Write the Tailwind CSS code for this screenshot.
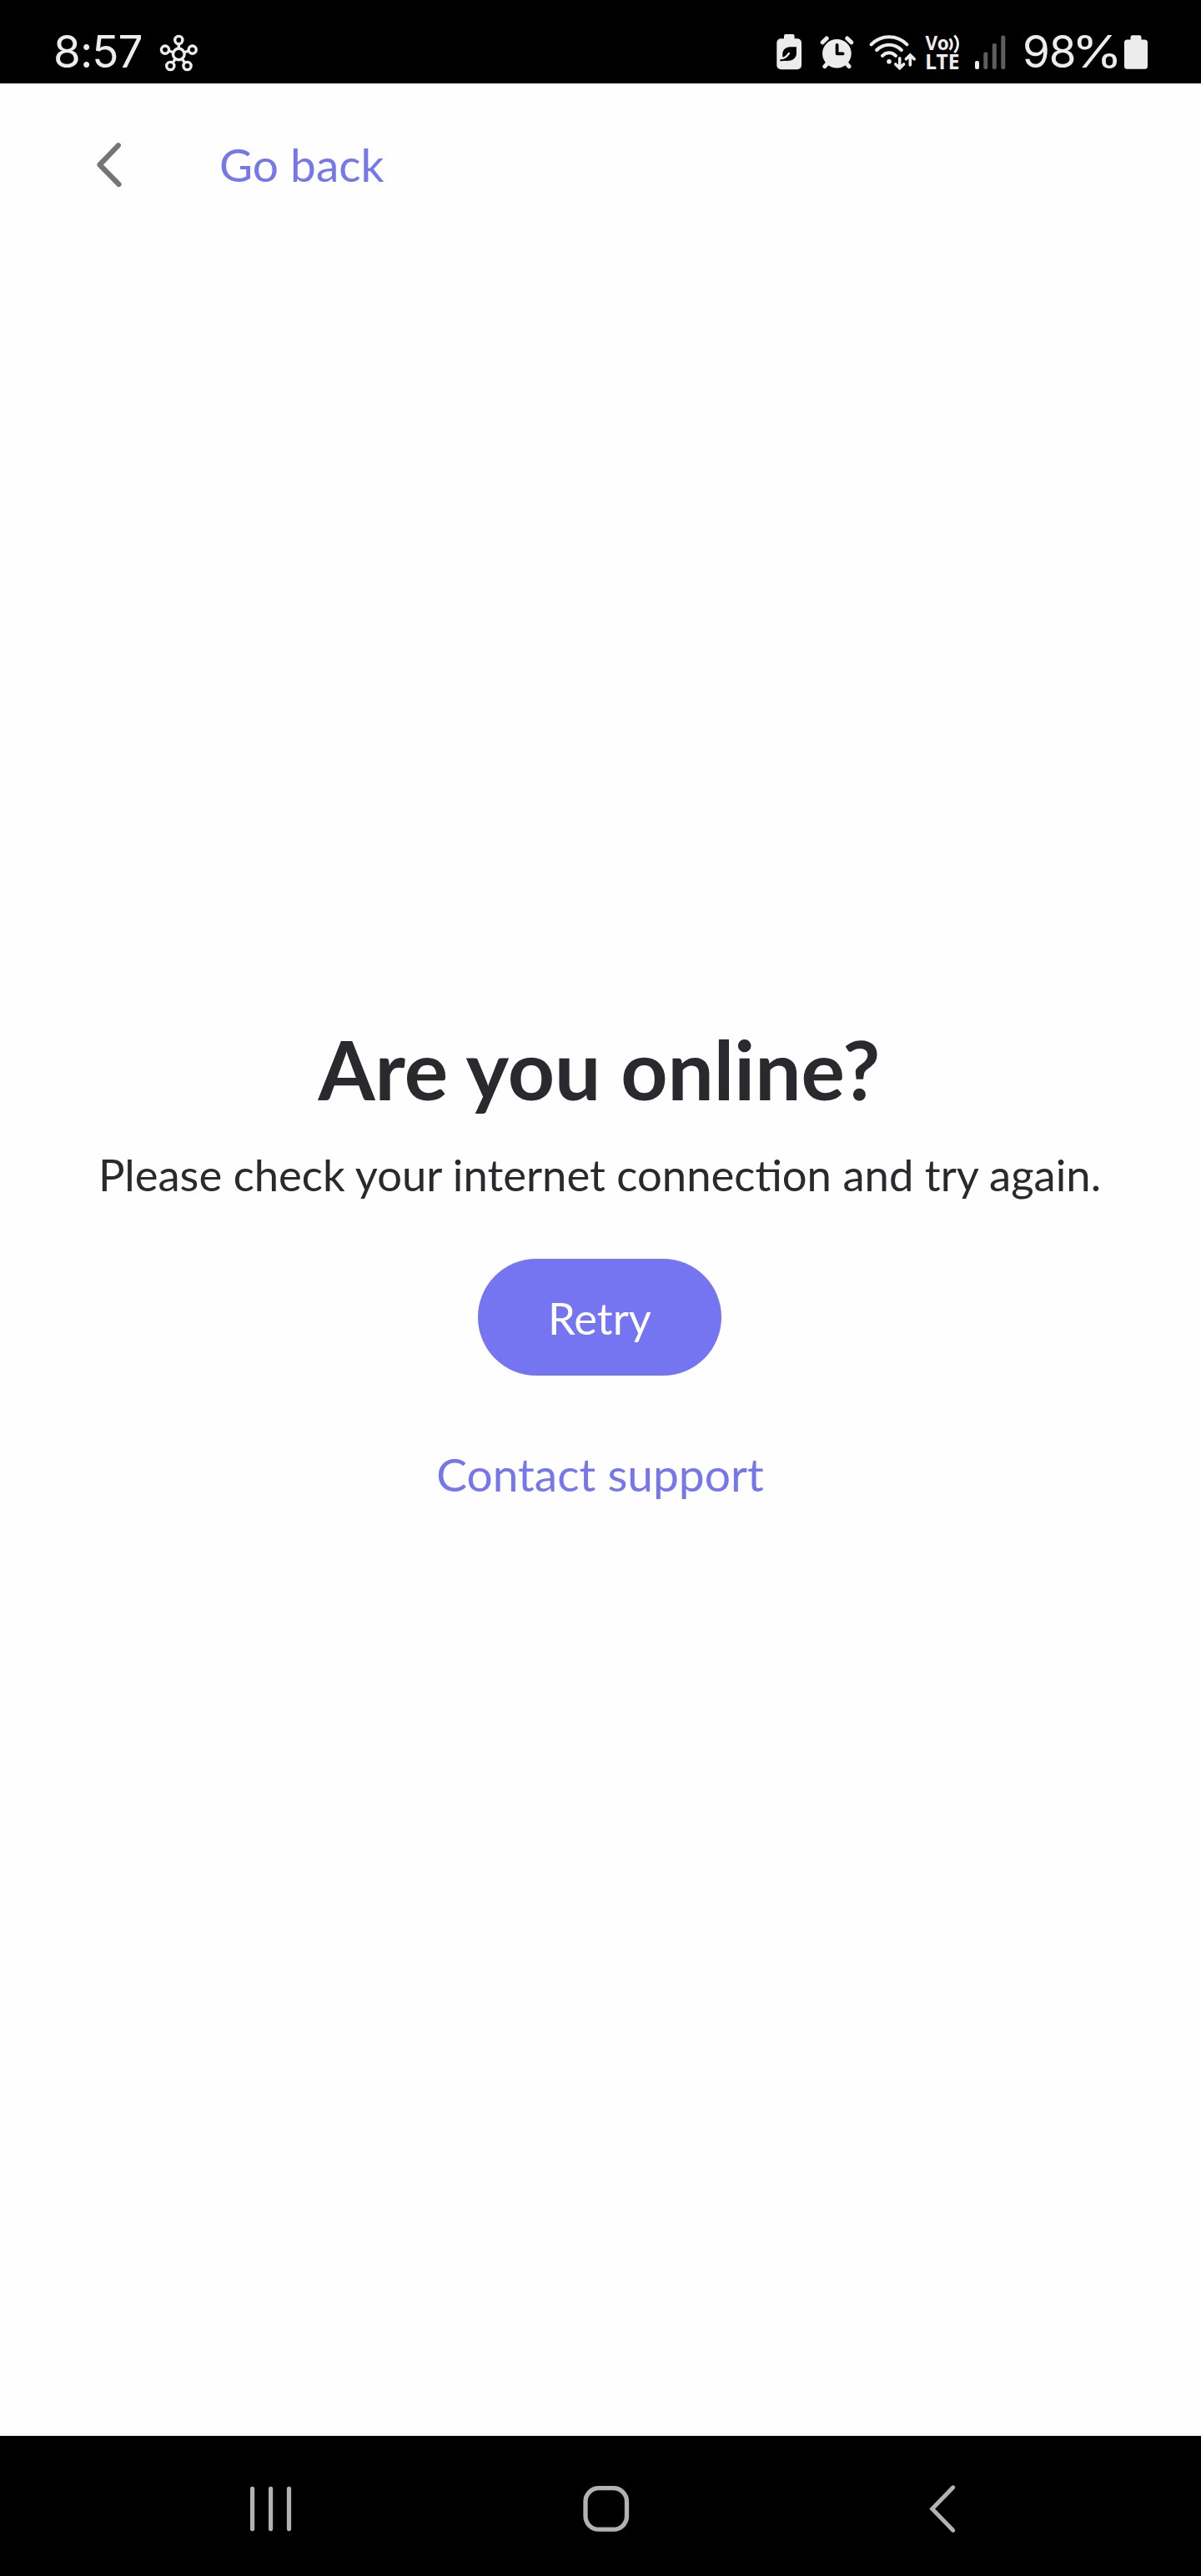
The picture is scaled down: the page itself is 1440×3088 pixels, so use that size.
<!DOCTYPE html>
<html lang="en">
<head>
<meta charset="utf-8">
<title>Are you online?</title>
<script src="https://cdn.jsdelivr.net/npm/@tailwindcss/browser@4"></script>
</head>
<body class="w-[1440px] h-[3088px] flex flex-col bg-[#fefefe] font-[Lato,sans-serif] overflow-hidden">

  <!-- Status bar -->
  <div class="h-[100px] shrink-0 bg-black text-[#ececec] flex items-start justify-between pl-[64px] pr-[63px] pt-[36px]">
    <div class="flex items-start">
      <span class="w-[126px] font-[Inter,sans-serif] text-[53px] leading-[53px] tracking-[-0.9px]">8:57</span>
      <svg class="mt-[4px] w-[50px] h-[46px]" viewBox="190 40 50 46" fill="none" stroke="currentColor" stroke-width="3.4">
        <path d="M214.3 52v6M202.5 61l6 2M226.2 61l-6 2M207 75.2l3.6-5M221.6 75.2l-3.6-5"/>
        <circle cx="214.3" cy="65" r="6.8"/>
        <circle cx="214.3" cy="48" r="4.6"/>
        <circle cx="198" cy="59.6" r="4.6"/>
        <circle cx="230.7" cy="59.6" r="4.6"/>
        <circle cx="204.3" cy="79" r="4.6"/>
        <circle cx="224.5" cy="79" r="4.6"/>
      </svg>
    </div>
    <div class="flex items-start">
      <!-- Power saving -->
      <svg class="mt-[4px] w-[32px] h-[46px]" viewBox="930 40 32 46" fill="currentColor">
        <path d="M942 41h8.600a2 2 0 0 1 2 2v3.200h3.400a5 5 0 0 1 5 5v27.100a5 5 0 0 1-5 5h-19.700a5 5 0 0 1-5-5v-27.100a5 5 0 0 1 5-5h3.700v-3.200a2 2 0 0 1 2-2z"/>
        <path fill="#000" d="M955 56.300h-7.500c-6 0-9.600 4.200-9.300 10.200c.1 2.600 1.200 4.700 2.500 6.200c7.500.9 14.300-1.500 14.300-9.500z"/>
        <path fill="none" stroke="#ececec" stroke-width="2.200" stroke-linecap="round" d="M936 70.300c4 .2 7-2.300 10-6.300"/>
        <path fill="none" stroke="#000" stroke-width="2" d="M935.300 72.200c3.200.2 5-.4 7-1.400"/>
      </svg>
      <!-- Alarm -->
      <svg class="ml-[20px] mt-[4px] w-[42px] h-[46px]" viewBox="982 40 42 46" fill="none" stroke="currentColor" stroke-width="5" stroke-linecap="round">
        <circle cx="1003.400" cy="64.200" r="17.300" fill="currentColor" stroke="none"/>
        <path d="M986.200 50.800l5-4.800M1015.800 46l5 4.800M988.900 79.600l4-4.500M1018 79.600l-4-4.500"/>
        <path stroke="#000" stroke-width="3.800" stroke-linejoin="round" d="M1003.600 54v10.300h7"/>
      </svg>
      <!-- Wi-Fi with activity arrows -->
      <svg class="ml-[18px] mt-[4px] w-[58px] h-[46px]" viewBox="1042 40 58 46" fill="none" stroke="currentColor" stroke-width="4" stroke-linecap="round">
        <circle cx="1066" cy="73.800" r="2.800" fill="currentColor" stroke="none"/>
        <path d="M1044.600 53.300c11.800-12.200 31-12.200 42.800 0M1051.200 60c8.200-8.400 21.400-8.400 29.600 0M1058 66.800c4.500-4.800 11.500-4.800 16 0"/>
        <path stroke-width="3.600" d="M1078.700 69.800v11.500M1073.800 77l4.900 4.700l4.900-4.700M1091.300 78v-11M1086.400 70.800l4.900-4.700l4.900 4.700"/>
      </svg>
      <!-- VoLTE -->
      <svg class="ml-[8px] mt-[4px] w-[44px] h-[46px] overflow-visible" viewBox="1108 40 44 46" fill="currentColor">
        <text x="1109.500" y="59.500" font-family="Noto Sans" font-weight="700" font-size="22.500">Vo</text>
        <text x="1109.200" y="83.200" font-family="Noto Sans" font-weight="700" font-size="24.600">LTE</text>
        <path fill="none" stroke="currentColor" stroke-width="3" d="M1138.600 46.500c3.500 3.500 3.500 9.500 0 13M1144.300 42.500c5.500 5.500 5.500 15 0 20.500"/>
      </svg>
      <!-- Signal -->
      <svg class="ml-[16px] mt-[4px] w-[38px] h-[46px]" viewBox="1168 40 38 46" fill="#5e5e5e">
        <rect x="1169" y="73" width="5" height="10" rx="2" fill="#ececec"/>
        <rect x="1179.300" y="62.500" width="5" height="20.500" rx="2"/>
        <rect x="1189.800" y="52" width="5" height="31" rx="2"/>
        <rect x="1200.300" y="42.600" width="5" height="40.400" rx="2"/>
      </svg>
      <span class="ml-[20px] w-[121px] whitespace-nowrap font-[Inter,sans-serif] text-[53px] leading-[53px] tracking-[-1px]">98<span class="inline-block origin-left scale-x-[1.17] ml-[-5px]">%</span></span>
      <svg class="mt-[4px] w-[30px] h-[46px]" viewBox="1347 40 30 46" fill="currentColor">
        <path d="M1358 42.200h8a2.500 2.500 0 0 1 2.500 2.500v2.800h4a3.500 3.500 0 0 1 3.500 3.500v28.300a3.500 3.500 0 0 1-3.500 3.500h-21a3.500 3.500 0 0 1-3.500-3.500v-28.300a3.500 3.500 0 0 1 3.500-3.500h4v-2.800a2.500 2.500 0 0 1 2.500-2.500z"/>
      </svg>
    </div>
  </div>

  <!-- App header -->
  <header class="h-[194px] shrink-0 flex items-center pl-[110px]">
    <svg class="w-[40px] h-[60px]" viewBox="110 167 40 60" fill="none" stroke="#757575" stroke-width="6.200" stroke-linecap="round" stroke-linejoin="round">
      <path d="M141.800 174.300l-22.300 23.200l23 23.500"/>
    </svg>
    <a class="ml-[113px] text-[55px] leading-[66px] text-[#7577ea]">Go back</a>
  </header>

  <!-- Offline message -->
  <main class="flex-1 flex flex-col items-center pt-[927px] text-[#2a2a2e]">
    <h1 class="text-[98.1px] leading-[120px] font-bold mr-[3px]">Are you online?</h1>
    <p class="mt-[35px] mr-[2px] text-[52.6px] leading-[64px] whitespace-nowrap">Please check your internet connection and try again.</p>
    <button class="mt-[69px] mr-[2px] w-[292px] h-[140px] rounded-full bg-[#7575f2] text-white text-[52.6px] leading-[64px] pt-px">Retry</button>
    <a class="mt-[85px] mr-px text-[55.1px] leading-[66px] text-[#7577ea]">Contact support</a>
  </main>

  <!-- System navigation -->
  <nav class="h-[168px] shrink-0 bg-black flex items-center pt-[6px] pl-[298px]">
    <svg class="w-[54px] h-[60px]" viewBox="298 2977 54 60" fill="#b2b2b2">
      <rect x="300" y="2980.700" width="5.200" height="53.500" rx="2.600"/>
      <rect x="322" y="2980.700" width="5.200" height="53.500" rx="2.600"/>
      <rect x="343.900" y="2980.700" width="5.200" height="53.500" rx="2.600"/>
    </svg>
    <svg class="ml-[344px] w-[62px] h-[60px]" viewBox="696 2977 62 60" fill="none" stroke="#b2b2b2" stroke-width="5.300">
      <rect x="702" y="2982.700" width="49.500" height="49.500" rx="16"/>
    </svg>
    <svg class="ml-[352px] w-[40px] h-[60px]" viewBox="1110 2977 40 60" fill="none" stroke="#b2b2b2" stroke-width="5" stroke-linecap="round">
      <path d="M1142.700 2981.800l-25 25.700l25 25.700"/>
    </svg>
  </nav>
</body>
</html>
